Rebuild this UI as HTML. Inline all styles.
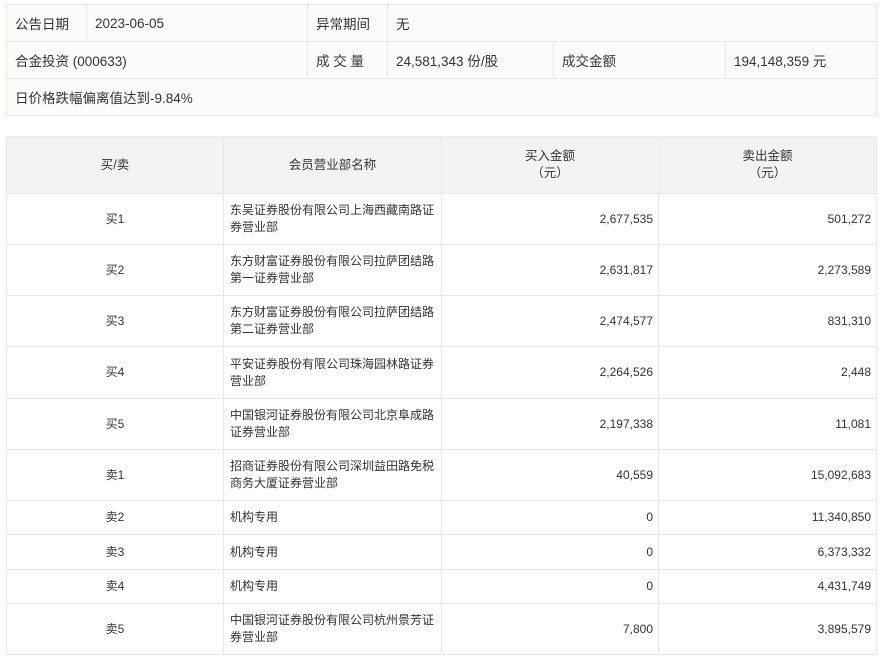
<!DOCTYPE html>
<html><head><meta charset="utf-8"><style>
body{margin:0;background:#fff;font-family:"Liberation Sans","Noto Sans CJK SC",sans-serif;color:#333;}
table{border-collapse:collapse;position:absolute;left:6px;table-layout:fixed;}
td{border:1px solid #e8e8e8;padding:0 8px;box-sizing:border-box;}
#t1{top:4px;width:870px;background:#fcfcfa;font-size:13.5px;}
#t1 td{height:37px;}
#t2{top:136px;width:870px;font-size:12px;}
#t2 td{line-height:17px;}
#t2 tr.h td{background:#f3f3f3;text-align:center;height:57px;font-size:12.5px;}
#t2 td.c{text-align:center;}
#t2 td.r{text-align:right;padding-right:5px;}
#t2 td.n{padding:0 1px 0 6px;}
</style></head><body>
<table id="t1">
<colgroup><col style="width:80px"><col style="width:221px"><col style="width:80px"><col style="width:166px"><col style="width:172px"><col style="width:151px"></colgroup>
<tr><td>公告日期</td><td>2023-06-05</td><td>异常期间</td><td colspan="3">无</td></tr>
<tr><td colspan="2">合金投资 (000633)</td><td>成 交 量</td><td>24,581,343 份/股</td><td>成交金额</td><td>194,148,359 元</td></tr>
<tr><td colspan="6">日价格跌幅偏离值达到-9.84%</td></tr>
</table>
<table id="t2">
<colgroup><col style="width:217px"><col style="width:218px"><col style="width:217px"><col style="width:218px"></colgroup>
<tr class="h"><td>买/卖</td><td>会员营业部名称</td><td>买入金额<br>（元）</td><td>卖出金额<br>（元）</td></tr>
<tr style="height:51px"><td class="c">买1</td><td class="n">东吴证券股份有限公司上海西藏南路证<br>券营业部</td><td class="r">2,677,535</td><td class="r">501,272</td></tr>
<tr style="height:51px"><td class="c">买2</td><td class="n">东方财富证券股份有限公司拉萨团结路<br>第一证券营业部</td><td class="r">2,631,817</td><td class="r">2,273,589</td></tr>
<tr style="height:51px"><td class="c">买3</td><td class="n">东方财富证券股份有限公司拉萨团结路<br>第二证券营业部</td><td class="r">2,474,577</td><td class="r">831,310</td></tr>
<tr style="height:52px"><td class="c">买4</td><td class="n">平安证券股份有限公司珠海园林路证券<br>营业部</td><td class="r">2,264,526</td><td class="r">2,448</td></tr>
<tr style="height:51px"><td class="c">买5</td><td class="n">中国银河证券股份有限公司北京阜成路<br>证券营业部</td><td class="r">2,197,338</td><td class="r">11,081</td></tr>
<tr style="height:51px"><td class="c">卖1</td><td class="n">招商证券股份有限公司深圳益田路免税<br>商务大厦证券营业部</td><td class="r">40,559</td><td class="r">15,092,683</td></tr>
<tr style="height:34px"><td class="c">卖2</td><td class="n">机构专用</td><td class="r">0</td><td class="r">11,340,850</td></tr>
<tr style="height:35px"><td class="c">卖3</td><td class="n">机构专用</td><td class="r">0</td><td class="r">6,373,332</td></tr>
<tr style="height:34px"><td class="c">卖4</td><td class="n">机构专用</td><td class="r">0</td><td class="r">4,431,749</td></tr>
<tr style="height:51px"><td class="c">卖5</td><td class="n">中国银河证券股份有限公司杭州景芳证<br>券营业部</td><td class="r">7,800</td><td class="r">3,895,579</td></tr>
</table>
</body></html>
